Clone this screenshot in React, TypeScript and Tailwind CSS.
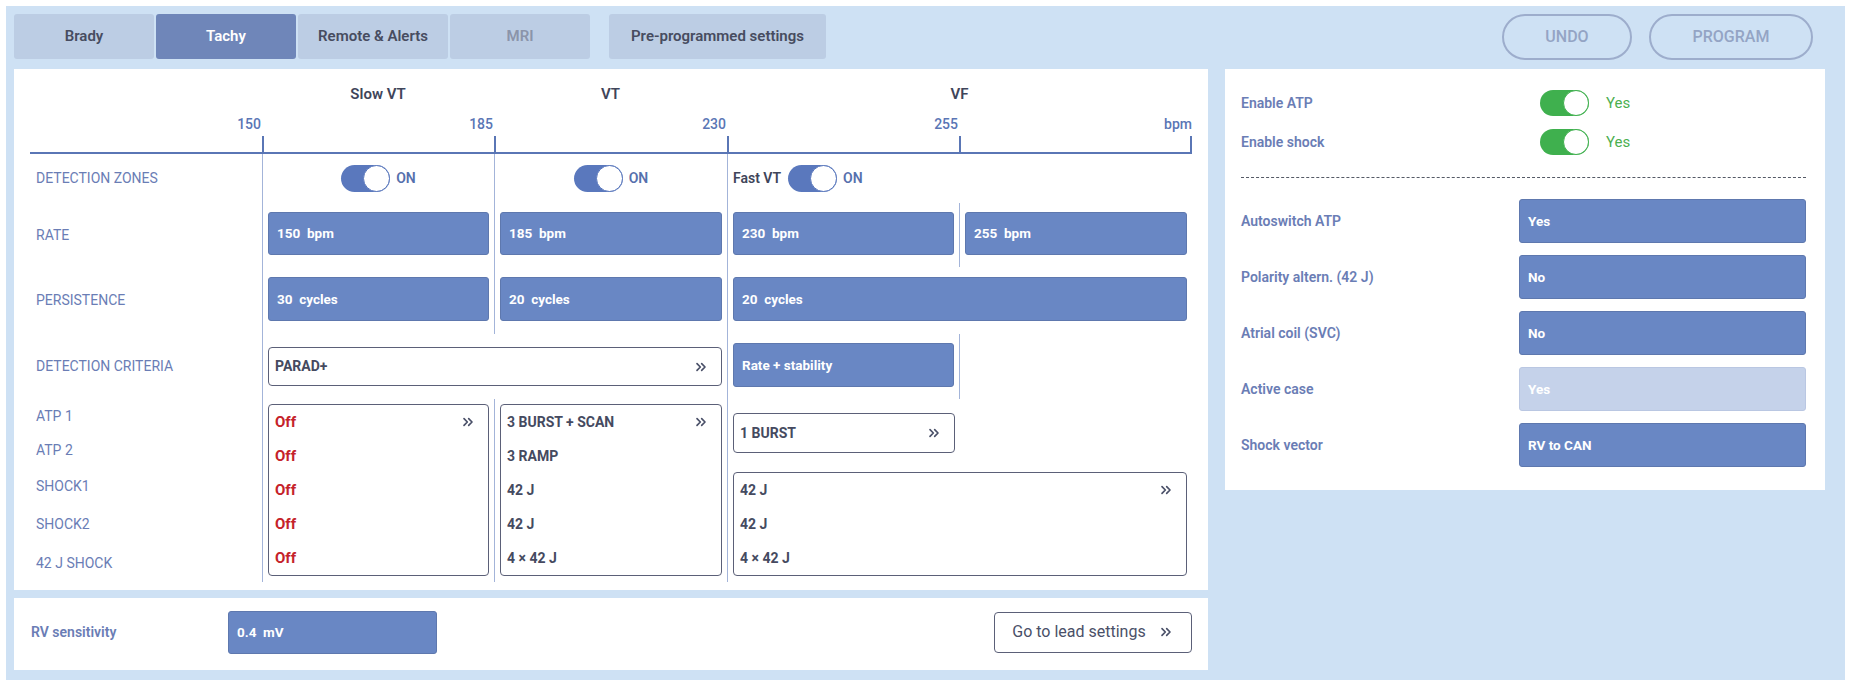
import { ReactNode } from 'react';
import { ChevronsRight } from 'lucide-react';

// column widths of the tachy zone table: label | Slow VT | VT | Fast VT | VF
const GRID = 'grid grid-cols-[232px_232px_233px_232px_233px]';
const CELL = 'border-l border-[#a3b4d9] px-[5px]';

function Toggle({ green = false }: { green?: boolean }) {
  if (green) {
    return (
      <div className="flex h-[26px] w-[49px] shrink-0 justify-end rounded-full bg-[#3fb04e]">
        <div className="h-[26px] w-[26px] rounded-full border border-[#3fb04e] bg-white" />
      </div>
    );
  }
  return (
    <div className="flex h-[27px] w-[49px] shrink-0 justify-end rounded-full bg-[#5a78bd]">
      <div className="h-[27px] w-[27px] rounded-full border border-[#5a78bd] bg-white" />
    </div>
  );
}

function On() {
  return <span className="text-[14px] font-semibold text-[#5670ad]">ON</span>;
}

function Filled({ children, className = '' }: { children: ReactNode; className?: string }) {
  return (
    <div
      className={`flex items-center whitespace-pre rounded-[3px] border border-[#5e78ae] bg-[#6987c4] pl-[8px] text-[13.5px] font-bold text-white ${className}`}
    >
      {children}
    </div>
  );
}

function Chev() {
  return <ChevronsRight size={16} strokeWidth={2.5} className="text-[#4a5068]" />;
}

function RowLabel({ children }: { children: ReactNode }) {
  return <div className="flex items-center pl-[6px] text-[14px] text-[#6a7db5]">{children}</div>;
}

function ListRow({ children, chev = false, red = false }: { children: ReactNode; chev?: boolean; red?: boolean }) {
  return (
    <div
      className={`flex h-[34px] items-center justify-between pl-[6px] pr-[12px] font-bold ${
        red ? 'text-[15px] text-[#c5222a]' : 'text-[14px] text-[#454a60]'
      }`}
    >
      <span>{children}</span>
      {chev && <Chev />}
    </div>
  );
}

function Tab({ label, className }: { label: string; className: string }) {
  return (
    <div className={`flex h-[45px] items-center justify-center rounded-[3px] text-[15px] font-semibold ${className}`}>
      {label}
    </div>
  );
}

function TachyPanel() {
  return (
    <div className="bg-white px-[16px] pb-[8px] pt-[14px]">
      <div className={`${GRID} h-[22px] items-center text-[15px] font-semibold text-[#3f455a]`}>
        <div />
        <div className="text-center">Slow VT</div>
        <div className="text-center">VT</div>
        <div className="col-span-2 text-center">VF</div>
      </div>
      <div className={`${GRID} mt-[7px] h-[24px] items-center text-right text-[14px] font-medium text-[#5a76b5]`}>
        <div className="pr-[1px]">150</div>
        <div className="pr-[1px]">185</div>
        <div className="pr-[1px]">230</div>
        <div className="pr-[1px]">255</div>
        <div>bpm</div>
      </div>
      <div className={`${GRID} h-[18px] border-b-2 border-[#5a76b5]`}>
        <div />
        <div className="border-l-2 border-[#5a76b5]" />
        <div className="border-l-2 border-[#5a76b5]" />
        <div className="border-l-2 border-[#5a76b5]" />
        <div className="border-x-2 border-[#5a76b5]" />
      </div>

      {/* detection zones */}
      <div className={`${GRID} h-[49px]`}>
        <RowLabel>DETECTION ZONES</RowLabel>
        <div className={`${CELL} flex items-center justify-center gap-[6px]`}>
          <Toggle />
          <On />
        </div>
        <div className={`${CELL} flex items-center justify-center gap-[6px]`}>
          <Toggle />
          <On />
        </div>
        <div className={`${CELL} col-span-2 flex items-center gap-[6px]`}>
          <span className="mr-[1px] text-[14px] font-semibold text-[#3f455a]">Fast VT</span>
          <Toggle />
          <On />
        </div>
      </div>

      {/* rate */}
      <div className={`${GRID} h-[64px]`}>
        <RowLabel>RATE</RowLabel>
        <div className={`${CELL} pt-[9px]`}>
          <Filled className="h-[43px]">150  bpm</Filled>
        </div>
        <div className={`${CELL} pt-[9px]`}>
          <Filled className="h-[43px]">185  bpm</Filled>
        </div>
        <div className={`${CELL} pt-[9px]`}>
          <Filled className="h-[43px]">230  bpm</Filled>
        </div>
        <div className={`${CELL} pt-[9px]`}>
          <Filled className="h-[43px]">255  bpm</Filled>
        </div>
      </div>

      {/* persistence */}
      <div className={`${GRID} h-[67px]`}>
        <RowLabel>PERSISTENCE</RowLabel>
        <div className={`${CELL} pt-[10px]`}>
          <Filled className="h-[44px]">30  cycles</Filled>
        </div>
        <div className={`${CELL} pt-[10px]`}>
          <Filled className="h-[44px]">20  cycles</Filled>
        </div>
        <div className={`${CELL} col-span-2 pt-[10px]`}>
          <Filled className="h-[44px]">20  cycles</Filled>
        </div>
      </div>

      {/* detection criteria */}
      <div className={`${GRID} h-[65px]`}>
        <RowLabel>DETECTION CRITERIA</RowLabel>
        <div className={`${CELL} col-span-2 pt-[13px]`}>
          <div className="flex h-[39px] items-center justify-between rounded-[4px] border border-[#5b6078] bg-white pl-[6px] pr-[12px] text-[14px] font-bold text-[#454a60]">
            <span>PARAD+</span>
            <Chev />
          </div>
        </div>
        <div className={`${CELL} pt-[9px]`}>
          <Filled className="h-[44px]">Rate + stability</Filled>
        </div>
        <div className={CELL} />
      </div>

      {/* therapies */}
      <div className={`${GRID} h-[183px]`}>
        <div className="flex flex-col pl-[6px] text-[14px] text-[#6a7db5]">
          <div className="flex h-[34px] items-center">ATP 1</div>
          <div className="flex h-[34px] items-center">ATP 2</div>
          <div className="flex h-[38px] items-center">SHOCK1</div>
          <div className="flex h-[39px] items-center">SHOCK2</div>
          <div className="flex h-[38px] items-center">42 J SHOCK</div>
        </div>
        <div className={`${CELL} pt-[5px]`}>
          <div className="rounded-[4px] border border-[#5b6078] bg-white">
            <ListRow red chev>Off</ListRow>
            <ListRow red>Off</ListRow>
            <ListRow red>Off</ListRow>
            <ListRow red>Off</ListRow>
            <ListRow red>Off</ListRow>
          </div>
        </div>
        <div className={`${CELL} pt-[5px]`}>
          <div className="rounded-[4px] border border-[#5b6078] bg-white">
            <ListRow chev>3 BURST + SCAN</ListRow>
            <ListRow>3 RAMP</ListRow>
            <ListRow>42 J</ListRow>
            <ListRow>42 J</ListRow>
            <ListRow>4 × 42 J</ListRow>
          </div>
        </div>
        <div className={`${CELL} col-span-2 flex flex-col items-start pt-[14px]`}>
          <div className="flex h-[40px] w-[222px] items-center justify-between rounded-[4px] border border-[#5b6078] bg-white pl-[6px] pr-[12px] text-[14px] font-bold text-[#454a60]">
            <span>1 BURST</span>
            <Chev />
          </div>
          <div className="mt-[19px] w-full rounded-[4px] border border-[#5b6078] bg-white">
            <ListRow chev>42 J</ListRow>
            <ListRow>42 J</ListRow>
            <ListRow>4 × 42 J</ListRow>
          </div>
        </div>
      </div>
    </div>
  );
}

function SettingRow({ label, value, disabled = false }: { label: string; value: string; disabled?: boolean }) {
  return (
    <div className="flex items-center">
      <div className="w-[278px] text-[14px] font-semibold text-[#6a7db5]">{label}</div>
      {disabled ? (
        <div className="flex h-[44px] flex-1 items-center rounded-[3px] border border-[#bac7e2] bg-[#c5d2ea] pl-[8px] text-[13.5px] font-bold text-white">
          {value}
        </div>
      ) : (
        <Filled className="h-[44px] flex-1">{value}</Filled>
      )}
    </div>
  );
}

function RightPanel() {
  return (
    <div className="w-[600px] self-start bg-white pb-[23px] pl-[16px] pr-[19px] pt-[21px]">
      <div className="flex h-[26px] items-center">
        <div className="w-[299px] text-[14px] font-semibold text-[#6a7db5]">Enable ATP</div>
        <Toggle green />
        <span className="ml-[17px] text-[15px] text-[#4caf50]">Yes</span>
      </div>
      <div className="mt-[13px] flex h-[26px] items-center">
        <div className="w-[299px] text-[14px] font-semibold text-[#6a7db5]">Enable shock</div>
        <Toggle green />
        <span className="ml-[17px] text-[15px] text-[#4caf50]">Yes</span>
      </div>
      <div className="mt-[22px] border-t border-dashed border-[#555a66]" />
      <div className="mt-[21px] flex flex-col gap-[12px]">
        <SettingRow label="Autoswitch ATP" value="Yes" />
        <SettingRow label="Polarity altern. (42 J)" value="No" />
        <SettingRow label="Atrial coil (SVC)" value="No" />
        <SettingRow label="Active case" value="Yes" disabled />
        <SettingRow label="Shock vector" value="RV to CAN" />
      </div>
    </div>
  );
}

export default function App() {
  return (
    <div className="min-h-screen bg-white pl-[6px] pt-[6px] font-['Roboto',sans-serif]">
      <div className="flex h-[674px] w-[1839px] flex-col bg-[#cee1f4] px-[8px] pt-[8px]">
        <div className="flex h-[45px] items-center">
          <Tab label="Brady" className="w-[140px] bg-[#bccde4] text-[#474c60]" />
          <Tab label="Tachy" className="ml-[2px] w-[140px] bg-[#6f86b9] text-white" />
          <Tab label="Remote & Alerts" className="ml-[2px] w-[150px] bg-[#bccde4] text-[#474c60]" />
          <Tab label="MRI" className="ml-[2px] w-[140px] bg-[#bccde4] text-[#8b94aa]" />
          <Tab label="Pre-programmed settings" className="ml-[19px] w-[217px] bg-[#bccde4] text-[#474c60]" />
          <div className="ml-auto mr-[24px] flex gap-[17px]">
            <div className="flex h-[46px] w-[130px] items-center justify-center rounded-full border-2 border-[#9dadcc] text-[16px] font-medium text-[#94a4c4]">
              UNDO
            </div>
            <div className="flex h-[46px] w-[164px] items-center justify-center rounded-full border-2 border-[#9dadcc] text-[16px] font-medium text-[#94a4c4]">
              PROGRAM
            </div>
          </div>
        </div>

        <div className="mt-[10px] flex items-start gap-[17px]">
          <div className="flex w-[1194px] flex-col gap-[8px]">
            <TachyPanel />
            <div className="flex h-[72px] items-center justify-between bg-white pb-[4px] pl-[17px] pr-[16px]">
              <div className="flex items-center">
                <div className="w-[197px] text-[14px] font-semibold text-[#6a7db5]">RV sensitivity</div>
                <Filled className="h-[43px] w-[209px]">0.4  mV</Filled>
              </div>
              <div className="flex h-[41px] w-[198px] items-center justify-center gap-[12px] rounded-[4px] border border-[#5b6078] text-[16px] text-[#4a5068]">
                <span>Go to lead settings</span>
                <Chev />
              </div>
            </div>
          </div>
          <RightPanel />
        </div>
      </div>
    </div>
  );
}
